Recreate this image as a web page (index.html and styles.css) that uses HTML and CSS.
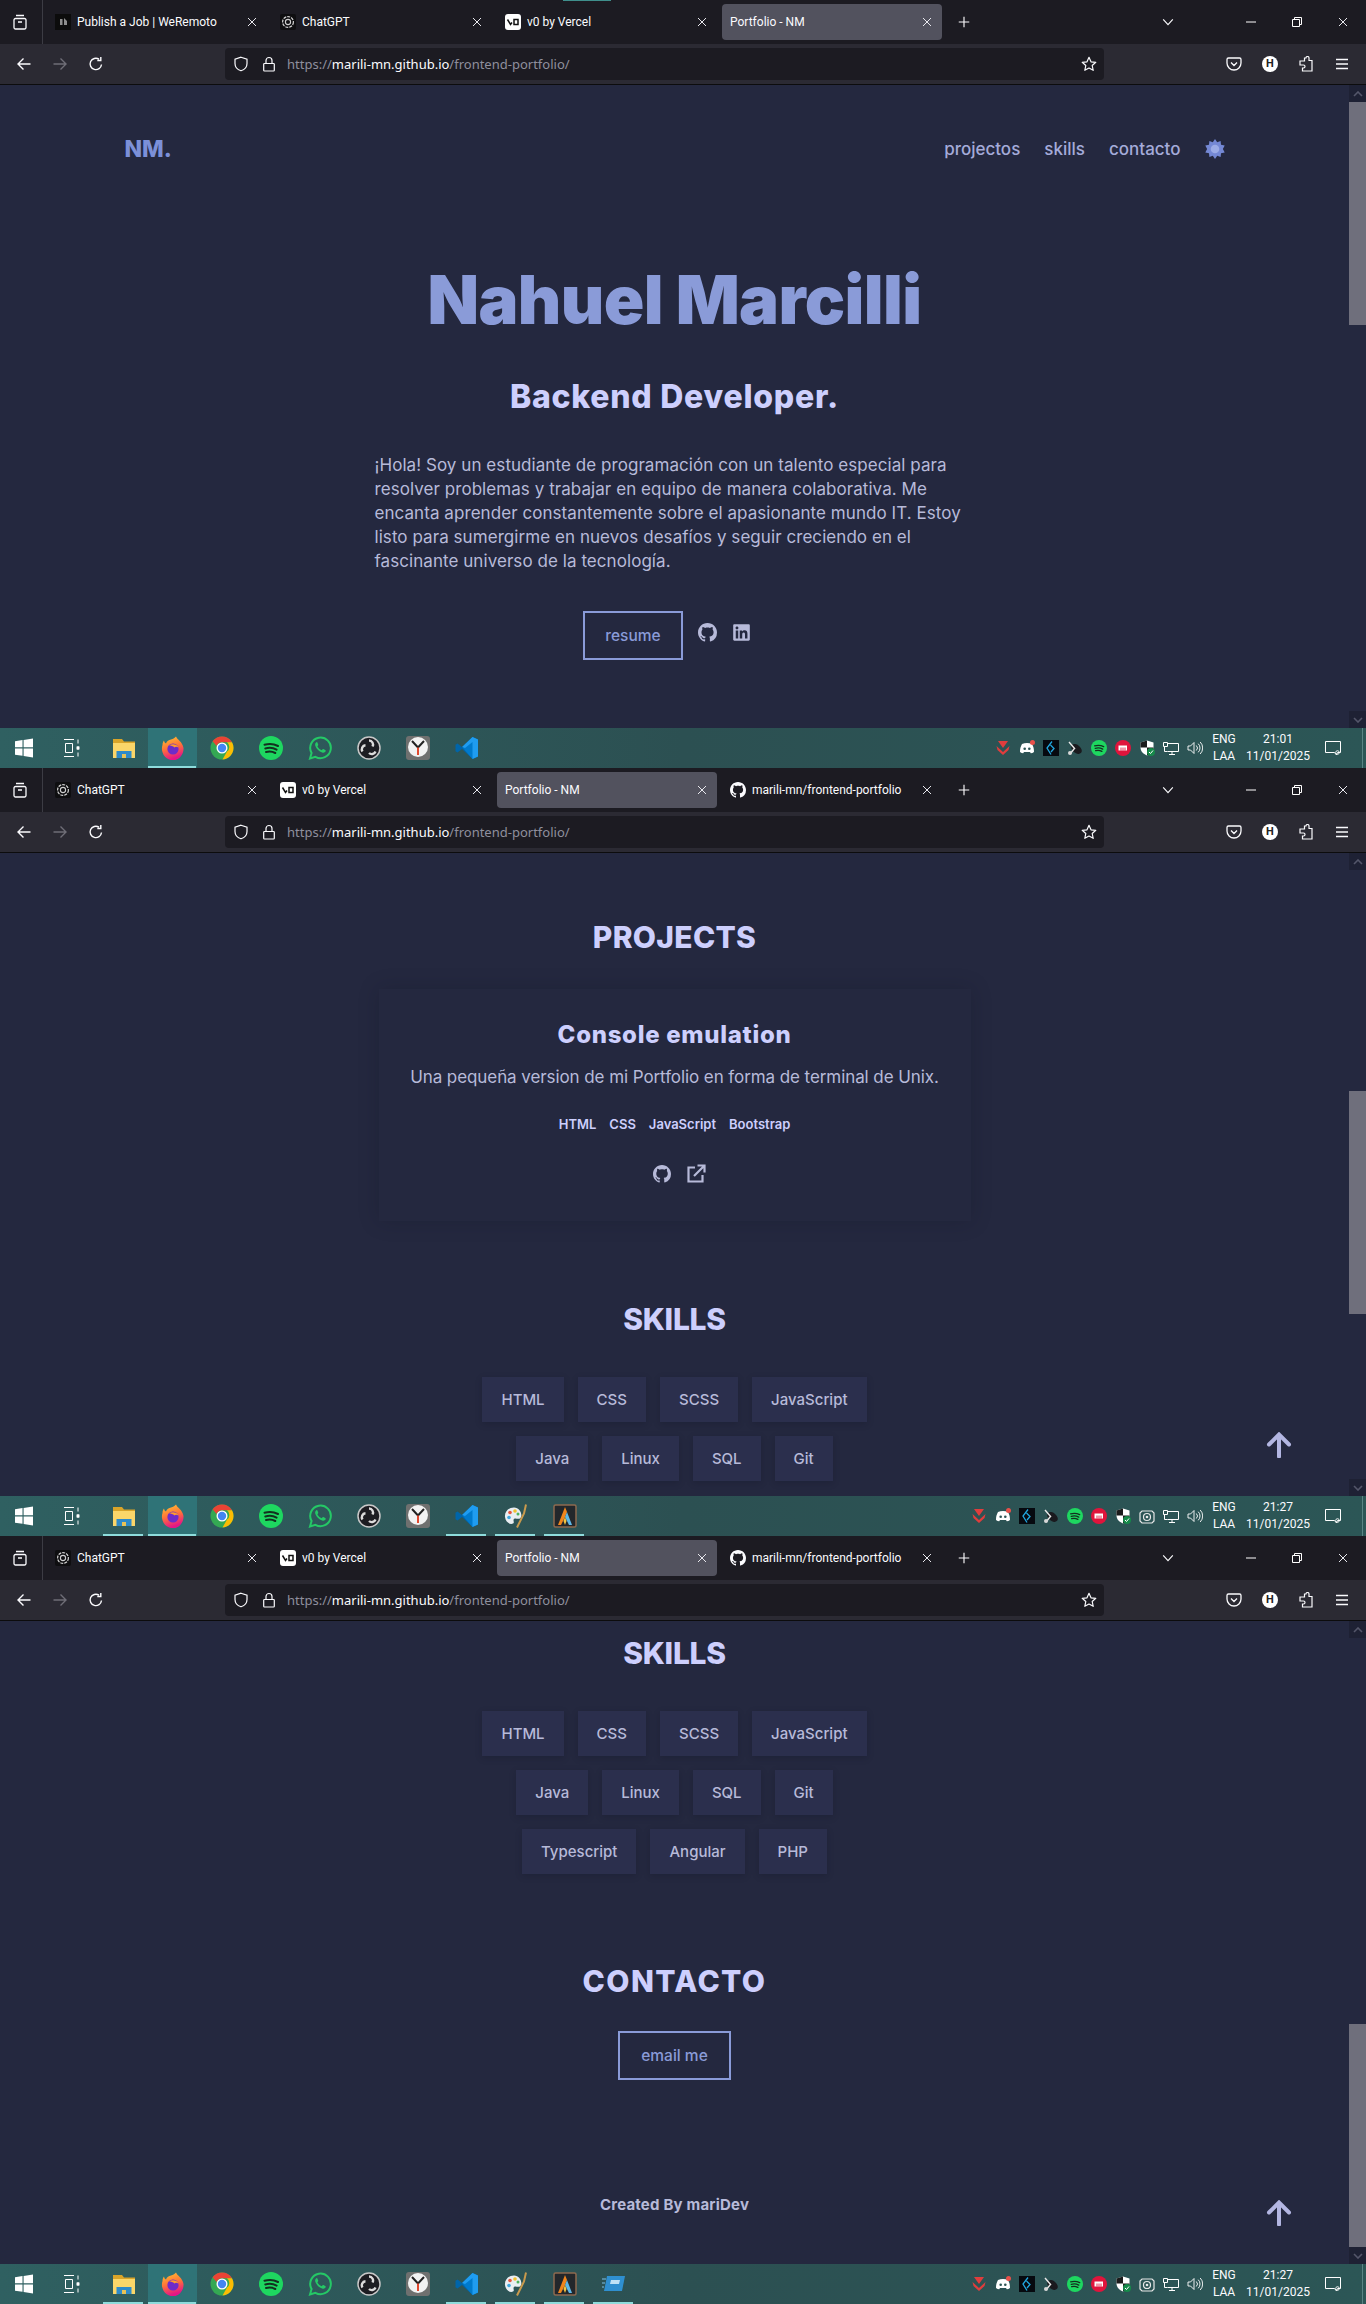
FILE: index.html
```html
<!doctype html>
<html lang="en">
	<head>
		<meta charset="utf-8" />
		<title>Portfolio - NM</title>
		<link rel="stylesheet" href="styles.css">
	</head>

	<body>
		<!-- Icon sprite -->
		<svg class="sprite" xmlns="http://www.w3.org/2000/svg">
			<symbol id="i-view" viewBox="0 0 16 16"><path d="M4 1.5h8M3.5 4.5h9A1.5 1.5 0 0 1 14 6v7.5a1.5 1.5 0 0 1-1.5 1.5h-9A1.5 1.5 0 0 1 2 13.500V6a1.500 1.500 0 0 1 1.500-1.500zM6 8h4" fill="none" stroke="#fbfbfe" stroke-width="1.300"/></symbol>
			<symbol id="i-close" viewBox="0 0 12 12"><path d="M2 2l8 8M10 2l-8 8" fill="none" stroke="#e8e8ee" stroke-width="1"/></symbol>
			<symbol id="i-plus" viewBox="0 0 16 16"><path d="M8 2v12M2 8h12" fill="none" stroke="#fbfbfe" stroke-width="1.300"/></symbol>
			<symbol id="i-chev" viewBox="0 0 16 16"><path d="M2.500 5l5.500 6 5.500-6" fill="none" stroke="#fbfbfe" stroke-width="1.300"/></symbol>
			<symbol id="i-min" viewBox="0 0 12 12"><path d="M1 6h10" stroke="#fff" stroke-width="1"/></symbol>
			<symbol id="i-max" viewBox="0 0 12 12"><path d="M1.500 3.500h7v7h-7zM3.500 3.500v-2h7v7h-2" fill="none" stroke="#fff" stroke-width="1"/></symbol>
			<symbol id="i-back" viewBox="0 0 16 16"><path d="M14.500 8H2M7.500 2.500L2 8l5.500 5.500" fill="none" stroke="currentColor" stroke-width="1.400"/></symbol>
			<symbol id="i-reload" viewBox="0 0 16 16"><path d="M13.500 8.500A5.700 5.700 0 1 1 11 3.200M12.800 1v3.500H9.300" fill="none" stroke="#fbfbfe" stroke-width="1.400"/></symbol>
			<symbol id="i-shield" viewBox="0 0 16 16"><path d="M8 1.200l6 2v4.300c0 3.700-2.500 6.200-6 7.300-3.500-1.100-6-3.600-6-7.300V3.200z" fill="none" stroke="#fbfbfe" stroke-width="1.200"/></symbol>
			<symbol id="i-lock" viewBox="0 0 16 16"><path d="M3.500 7.500h9a.8.8 0 0 1 .8.8v5.900a.8.8 0 0 1-.8.8h-9a.8.8 0 0 1-.8-.8V8.300a.8.8 0 0 1 .8-.8zM5 7.500V4.500a3 3 0 0 1 6 0v3" fill="none" stroke="#fbfbfe" stroke-width="1.200"/></symbol>
			<symbol id="i-star" viewBox="0 0 16 16"><path d="M8 1.300l2 4.500 4.800.5-3.600 3.200 1 4.800L8 12l-4.200 2.300 1-4.800-3.600-3.200 4.800-.5z" fill="none" stroke="#fbfbfe" stroke-width="1.200" stroke-linejoin="round"/></symbol>
			<symbol id="i-pocket" viewBox="0 0 16 16"><path d="M2.500 2h11A1.500 1.500 0 0 1 15 3.500V7a7 7 0 0 1-14 0V3.500A1.500 1.500 0 0 1 2.500 2zM5 6.500l3 3 3-3" fill="none" stroke="#fbfbfe" stroke-width="1.300"/></symbol>
			<symbol id="i-puzzle" viewBox="0 0 16 16"><path d="M6 1.500h1.500a1.500 1.500 0 0 1 3 0V4h3v10.500H4v-3H5a1.500 1.500 0 0 0 0-3H1.500V4.500H6z" transform="translate(.5 .5)" fill="none" stroke="#fbfbfe" stroke-width="1.200"/></symbol>
			<symbol id="i-menu" viewBox="0 0 16 16"><path d="M2 3.500h12M2 8h12M2 12.500h12" stroke="#fbfbfe" stroke-width="1.300"/></symbol>
			<symbol id="i-github" viewBox="0 0 16 16"><path fill="currentColor" d="M8 0C3.580 0 0 3.580 0 8c0 3.540 2.290 6.530 5.470 7.590.4.070.55-.17.55-.38 0-.19-.01-.82-.01-1.490-2.010.37-2.530-.49-2.690-.94-.09-.23-.48-.94-.82-1.130-.28-.15-.68-.52-.01-.53.63-.01 1.080.58 1.230.82.72 1.210 1.870.87 2.330.66.07-.52.28-.87.51-1.070-1.780-.2-3.640-.89-3.640-3.950 0-.87.31-1.590.82-2.150-.08-.2-.36-1.020.08-2.120 0 0 .67-.21 2.200.82.64-.18 1.320-.27 2-.27.68 0 1.360.09 2 .27 1.530-1.040 2.200-.82 2.200-.82.44 1.100.16 1.920.08 2.120.51.56.82 1.270.82 2.150 0 3.070-1.870 3.750-3.650 3.950.29.25.54.73.54 1.480 0 1.070-.01 1.930-.01 2.200 0 .21.15.46.55.38A8.013 8.013 0 0 0 16 8c0-4.420-3.580-8-8-8z"/></symbol>
			<symbol id="i-linkedin" viewBox="0 0 448 512"><path fill="currentColor" d="M416 32H31.900C14.300 32 0 46.500 0 64.300v383.400C0 465.500 14.300 480 31.900 480H416c17.600 0 32-14.500 32-32.300V64.300c0-17.800-14.400-32.300-32-32.300zM135.400 416H69V202.200h66.500V416zm-33.200-243c-21.300 0-38.500-17.300-38.500-38.500S80.900 96 102.200 96c21.200 0 38.500 17.300 38.500 38.500 0 21.300-17.200 38.500-38.500 38.500zm282.100 243h-66.400V312c0-24.800-.5-56.700-34.500-56.700-34.600 0-39.900 27-39.900 54.900V416h-66.400V202.200h63.700v29.200h.9c8.900-16.800 30.600-34.500 62.900-34.500 67.200 0 79.700 44.300 79.700 101.900V416z"/></symbol>
			<symbol id="i-ext" viewBox="0 0 20 20"><path d="M9 3.500H2.500v14h14V11M8 12L18 2M11.500 1.500h7v7" fill="none" stroke="currentColor" stroke-width="2.200"/></symbol>
			<symbol id="i-sun" viewBox="0 0 20 20"><path fill="#7488d4" d="M10 0l2.200 3.200L15.600 2l.4 3.800 3.700.7-1.800 3.500 1.800 3.500-3.700.7-.4 3.800-3.400-1.200L10 20l-2.200-3.200L4.400 18 4 14.200.3 13.500 2.100 10 .3 6.500 4 5.800 4.400 2l3.400 1.200z"/><circle cx="10" cy="10" r="4.300" fill="#9cace6"/></symbol>
			<symbol id="i-up" viewBox="0 0 26 26"><path d="M13 24.500V3M3 12.500L13 2.500l10 10" fill="none" stroke="currentColor" stroke-width="4" stroke-linecap="round"/></symbol>
			<symbol id="i-sb-up" viewBox="0 0 10 6"><path d="M1 5l4-4 4 4" fill="none" stroke="#54566a" stroke-width="1.600"/></symbol>

			<!-- Favicons -->
			<symbol id="f-remoto" viewBox="0 0 16 16"><rect width="16" height="16" fill="#0c0c0c"/><path d="M5 5h2.500v6H5zM9 4l3 3v4H9z" fill="#8d8d8d"/></symbol>
			<symbol id="f-gpt" viewBox="0 0 16 16"><rect width="16" height="16" rx="2" fill="#0e0e10"/><circle cx="8" cy="8" r="5.400" fill="none" stroke="#d0d0d0" stroke-width="1.200" stroke-dasharray="3 1"/><circle cx="8" cy="8" r="2.600" fill="none" stroke="#d0d0d0" stroke-width="1.100"/></symbol>
			<symbol id="f-v0" viewBox="0 0 16 16"><rect width="16" height="16" rx="3" fill="#fff"/><path d="M2.500 5.500L5.500 10.500 7 8.500M9 5.500h4v5H9z" fill="none" stroke="#111" stroke-width="1.500"/></symbol>
			<symbol id="f-gh" viewBox="0 0 16 16"><use href="#i-github" color="#fbfbfe" width="16" height="16"/></symbol>

			<!-- Taskbar apps -->
			<symbol id="a-win" viewBox="0 0 20 20"><path fill="#fff" d="M1 3.200l7.500-1.100v7.200H1zM9.600 2l9.400-1.400v8.700H9.600zM1 10.500h7.500v7.300L1 16.700zM9.600 10.500H19v8.900L9.600 18z"/></symbol>
			<symbol id="a-tasks" viewBox="0 0 20 20"><path d="M2 1.500h10M2 18.500h10M3.500 5.500h7v9h-7zM16 1.500v4M16 8v4M16 14.500v4" fill="none" stroke="#fff" stroke-width="1"/><path d="M14.500 8.500h3v3h-3z" fill="#fff"/></symbol>
			<symbol id="a-folder" viewBox="0 0 24 24"><path fill="#d9a429" d="M1 3h9l2 2.500h11V9H1z"/><path fill="#fbd669" d="M1 7h22v15H1z"/><path fill="#2e8ac9" d="M4.500 15h15v7h-15z"/><path fill="#e8c256" d="M10 18h4v4h-4z"/></symbol>
			<symbol id="a-firefox" viewBox="0 0 24 24"><defs><linearGradient id="ffg" x1="0" y1="0" x2="0.3" y2="1"><stop offset="0" stop-color="#ffc92f"/><stop offset=".55" stop-color="#ff7139"/><stop offset="1" stop-color="#e31587"/></linearGradient></defs><path fill="url(#ffg)" d="M15 .5c1 3 6.500 5 7.500 11.500A10.800 11.500 0 1 1 1.500 9c0-2 .7-3.500 1.500-4.500.2 1.500 1 2.500 2 3 .5-2.500 3-3.500 5-4 .5 0 3.500-1 5-3z"/><circle cx="12" cy="13" r="5.600" fill="#6e2bc9"/><path fill="#ff9a2e" d="M8 9.500c3-2 8-1.500 9.500 2-2-1-3-1-4 0-1.500-1.500-3.500-2-5.500-2z"/></symbol>
			<symbol id="a-chrome" viewBox="0 0 24 24"><circle cx="12" cy="12" r="11.500" fill="#34a853"/><path fill="#ea4335" d="M12 .5a11.500 11.500 0 0 1 10 5.800H12a5.700 5.700 0 0 0-5.400 3.600L2.600 5.300A11.500 11.500 0 0 1 12 .5z"/><path fill="#fbbc04" d="M22 6.300A11.500 11.500 0 0 1 12.500 23.500L17 15.500a5.700 5.700 0 0 0 0-9.200z"/><circle cx="12" cy="12" r="5.500" fill="#fff"/><circle cx="12" cy="12" r="4.200" fill="#4285f4"/></symbol>
			<symbol id="a-spotify" viewBox="0 0 24 24"><circle cx="12" cy="12" r="12" fill="#1ed760"/><path d="M5.500 8.800c4.500-1.300 9.500-.9 13.500 1.200M6.300 12.500c3.800-1.100 8-.7 11.300 1.100M7 16c3.200-.8 6.500-.5 9.300 1" fill="none" stroke="#13301f" stroke-width="2" stroke-linecap="round"/></symbol>
			<symbol id="a-wa" viewBox="0 0 24 24"><path d="M2 22.500l1.600-5.500a10.300 10.300 0 1 1 3.800 3.800z" fill="none" stroke="#25c866" stroke-width="2"/><path fill="#25c866" d="M8.200 6.500c-1 .6-1.400 2-.8 3.500 1.200 3 3.700 5.500 6.700 6.600 1.600.5 2.900 0 3.400-1 .4-.8.200-1.300-.3-1.600l-1.800-.9c-.5-.2-.8 0-1.100.4l-.6.7c-1.900-.7-3.500-2.200-4.300-4l.6-.7c.3-.4.400-.7.200-1.100l-.8-1.800c-.2-.6-.6-.7-1.200-.1z"/></symbol>
			<symbol id="a-obs" viewBox="0 0 24 24"><circle cx="12" cy="12" r="11" fill="#1d1d22" stroke="#c8c8c8" stroke-width="1.500"/><path d="M12 4.500a4 4 0 0 1 3.500 6M5.500 15.500a4 4 0 0 1 3-6.200M18.500 15.500a4 4 0 0 1-6.500 1.500" fill="none" stroke="#dcdcdc" stroke-width="2.400"/></symbol>
			<symbol id="a-clock" viewBox="0 0 24 24"><rect width="24" height="24" rx="3" fill="#6f706f"/><circle cx="12" cy="11" r="10" fill="#f2f2f2"/><path d="M6 5l6 6.500L18 5" fill="none" stroke="#222" stroke-width="2"/><path d="M12 11.500V19" stroke="#e2492f" stroke-width="2"/></symbol>
			<symbol id="a-code" viewBox="0 0 24 24"><path fill="#0065a9" d="M17.500 1L7 11 2.500 7.500 .5 8.800V15.200l2 1.300L7 13l10.500 10z"/><path fill="#007acc" d="M17.500 1l5.500 2.500v17L17.500 23 8 12z"/><path fill="#1f9cf0" d="M17.500 1L23 3.500v17L17.500 23V6L10 12l-3-1z"/></symbol>
			<symbol id="a-paint" viewBox="0 0 24 24"><path fill="#e9eef2" d="M10 3.500C4 3.500 .5 8 1 13c.5 5 5 8 8 6.500 2-1-.5-3 1-4.500s4.500 1 6.500-1c2.500-3-.5-10.500-6.500-10.500z"/><circle cx="6" cy="8.500" r="1.800" fill="#e5563f"/><circle cx="11" cy="7" r="1.800" fill="#f2c230"/><circle cx="5" cy="13.500" r="1.800" fill="#3fa7e0"/><circle cx="14" cy="10" r="1.500" fill="#4db35e"/><path d="M22 .5l-2 9L13 23.500" fill="none" stroke="#c99a4d" stroke-width="2"/></symbol>
			<symbol id="a-alacritty" viewBox="0 0 24 24"><rect x="1" y="1" width="22" height="22" rx="1.500" fill="#23272b" stroke="#8d6a4f" stroke-width="1.500"/><path fill="#f0851d" d="M12 3l2 5-2 5-4 8H5z"/><path fill="#5fb8e8" d="M12 13l2-5 5 13h-3z"/><path fill="#f4c542" d="M12 13l1.500 4-1.500 4-1.500-4z"/></symbol>
			<symbol id="a-slides" viewBox="0 0 24 24"><path fill="#2f8fd0" d="M5 4h18l-3 15H2z"/><path fill="#bfe2f7" d="M9 8h9l-1 4H8z"/><path d="M0 7h4M0 11h3M0 15h2" stroke="#7cc2ea" stroke-width="1"/></symbol>

			<!-- Tray -->
			<symbol id="t-vortex" viewBox="0 0 16 16"><path fill="#e03d3d" d="M3 1h10l-5 7zM1.500 6L8 12l6.500-6-1 4L8 15 2.500 10z"/></symbol>
			<symbol id="t-discord" viewBox="0 0 16 16"><path fill="#fff" d="M3 4c3-1.200 7-1.200 10 0 1.500 2.500 2 5 2 8-1 .8-2.200 1.200-3.200 1.300l-.8-1.300H5l-.8 1.300C3.200 13.200 2 12.800 1 12c0-3 .5-5.500 2-8z"/><circle cx="5.700" cy="8.700" r="1.300" fill="#2d5454"/><circle cx="10.300" cy="8.700" r="1.300" fill="#2d5454"/><circle cx="13.500" cy="2.500" r="2.500" fill="#e8504a"/></symbol>
			<symbol id="t-blue" viewBox="0 0 16 16"><rect width="16" height="16" fill="#06090f"/><path d="M9 1.500L4 8l4 6.500M7.500 5L11 8.500 8 12" fill="none" stroke="#22a7e0" stroke-width="1.300"/></symbol>
			<symbol id="t-dish" viewBox="0 0 16 16"><ellipse cx="9.500" cy="9" rx="6" ry="4" transform="rotate(40 9.500 9)" fill="#1a1a1e"/><path d="M2 2l6 7M3 14l4-5" stroke="#e8e8e8" stroke-width="1.400"/><circle cx="3" cy="13" r="2" fill="#d8d8d8"/></symbol>
			<symbol id="t-red" viewBox="0 0 16 16"><circle cx="8" cy="8" r="8" fill="#e0143c"/><path fill="#fff" d="M3.500 5.500h8.500v5H3.500z"/><path d="M6 7.500v3M8 7.500v3M10 7.500v3" stroke="#e0143c" stroke-width=".9"/></symbol>
			<symbol id="t-def" viewBox="0 0 16 16"><path fill="#fff" d="M8 .5l6.500 2v5c0 3.500-2.500 6.500-6.500 8-4-1.500-6.500-4.500-6.500-8v-5z"/><path fill="#1b1b1b" d="M8 .5v7H1.500v-5zM8 7.500h6.500c0 3.500-2.500 6.500-6.500 8z"/><circle cx="12" cy="12" r="4" fill="#168a4a"/><path d="M10 12l1.500 1.500 2.500-3" fill="none" stroke="#fff" stroke-width="1"/></symbol>
			<symbol id="t-net" viewBox="0 0 16 16"><path d="M.5 2.500h4v4h-4zM4.500 3.500H15.500v8h-11M1.500 6.500v5h3M6 14.500h6M9 11.500v3" fill="none" stroke="#fff" stroke-width="1"/></symbol>
			<symbol id="t-vol" viewBox="0 0 16 16"><path d="M1 6h2.500L7 2.500v11L3.500 10H1zM9.300 5.500a3.500 3.500 0 0 1 0 5M11.200 3.700a6 6 0 0 1 0 8.600M13.200 2a8.500 8.500 0 0 1 0 12" fill="none" stroke="#fff" stroke-width=".9"/></symbol>
			<symbol id="t-note" viewBox="0 0 16 16"><path d="M.5 1.500h15v11h-3l-1 2.500-2-2.500H.5z" fill="none" stroke="#fff" stroke-width="1"/><circle cx="12.500" cy="12.500" r="1.800" fill="none" stroke="#fff" stroke-width=".9"/></symbol>
			<symbol id="t-cam" viewBox="0 0 16 16"><path d="M3 3h10l2 2v8l-2 2H3l-2-2V5z" fill="none" stroke="#e8e8e8" stroke-width="1.200"/><circle cx="8" cy="9" r="3.500" fill="none" stroke="#e8e8e8" stroke-width="1.200"/><circle cx="8" cy="9" r="1.300" fill="#e8e8e8"/></symbol>
		</svg>

		<!-- First capture: hero -->
		<section class="screen">
			<span class="edge-strip"></span>
			<div class="tabbar">
				<div class="view-btn"><svg class="ic-16"><use href="#i-view"/></svg></div>
				<div class="tab"><svg class="favicon"><use href="#f-remoto"/></svg><span class="tab-title">Publish a Job | WeRemoto</span><svg class="tab-close"><use href="#i-close"/></svg></div>
				<div class="tab"><svg class="favicon"><use href="#f-gpt"/></svg><span class="tab-title">ChatGPT</span><svg class="tab-close"><use href="#i-close"/></svg></div>
				<div class="tab"><svg class="favicon"><use href="#f-v0"/></svg><span class="tab-title">v0 by Vercel</span><svg class="tab-close"><use href="#i-close"/></svg></div>
				<div class="tab active"><span class="tab-title">Portfolio - NM</span><svg class="tab-close"><use href="#i-close"/></svg></div>
				<div class="new-tab"><svg class="ic-14"><use href="#i-plus"/></svg></div>
				<div class="all-tabs"><svg class="ic-14"><use href="#i-chev"/></svg></div>
				<div class="win-btn"><svg class="ic-12"><use href="#i-min"/></svg></div>
				<div class="win-btn"><svg class="ic-12"><use href="#i-max"/></svg></div>
				<div class="win-btn"><svg class="ic-12"><use href="#i-close"/></svg></div>
			</div>
			<div class="toolbar">
				<div class="tool-btn"><svg class="ic-16"><use href="#i-back"/></svg></div>
				<div class="tool-btn off flip"><svg class="ic-16"><use href="#i-back"/></svg></div>
				<div class="tool-btn"><svg class="ic-16"><use href="#i-reload"/></svg></div>
				<div class="urlbar">
					<svg class="ic-16 url-shield"><use href="#i-shield"/></svg>
					<svg class="ic-16 url-lock"><use href="#i-lock"/></svg>
					<span class="url">https://<b>marili-mn.github.io</b>/frontend-portfolio/</span>
					<svg class="ic-16 url-star"><use href="#i-star"/></svg>
				</div>
				<div class="tool-actions">
					<div class="tool-btn"><svg class="ic-16"><use href="#i-pocket"/></svg></div>
					<div class="tool-btn"><span class="avatar">H</span></div>
					<div class="tool-btn"><svg class="ic-16"><use href="#i-puzzle"/></svg></div>
					<div class="tool-btn"><svg class="ic-16"><use href="#i-menu"/></svg></div>
				</div>
			</div>
			<div class="view">
				<main class="page">
					<nav class="nav">
						<span class="logo">NM.</span>
						<ul class="nav-links">
							<li>projectos</li>
							<li>skills</li>
							<li>contacto</li>
							<li class="theme"><svg class="ic-20"><use href="#i-sun"/></svg></li>
						</ul>
					</nav>
					<div class="hero">
						<h1>Nahuel Marcilli</h1>
						<h2>Backend Developer.</h2>
						<p class="about">¡Hola! Soy un estudiante de programación con un talento especial para<br>resolver problemas y trabajar en equipo de manera colaborativa. Me<br>encanta aprender constantemente sobre el apasionante mundo IT. Estoy<br>listo para sumergirme en nuevos desafíos y seguir creciendo en el<br>fascinante universo de la tecnología.</p>
						<div class="hero-actions">
							<a class="btn resume">resume</a>
							<svg class="social"><use href="#i-github"/></svg>
							<svg class="social"><use href="#i-linkedin"/></svg>
						</div>
					</div>
				</main>
				<div class="scrollbar">
					<div class="sb-btn"><svg class="sb-arrow"><use href="#i-sb-up"/></svg></div>
					<div class="sb-track"><div class="sb-thumb"></div></div>
					<div class="sb-btn down"><svg class="sb-arrow"><use href="#i-sb-up"/></svg></div>
				</div>
			</div>
			<div class="taskbar">
				<div class="start"><svg class="ic-20"><use href="#a-win"/></svg></div>
				<div class="start tasks"><svg class="ic-20"><use href="#a-tasks"/></svg></div>
				<div class="app"><svg class="ic-24"><use href="#a-folder"/></svg></div>
				<div class="app open active"><svg class="ic-24"><use href="#a-firefox"/></svg></div>
				<div class="app"><svg class="ic-24"><use href="#a-chrome"/></svg></div>
				<div class="app"><svg class="ic-24"><use href="#a-spotify"/></svg></div>
				<div class="app"><svg class="ic-24"><use href="#a-wa"/></svg></div>
				<div class="app"><svg class="ic-24"><use href="#a-obs"/></svg></div>
				<div class="app"><svg class="ic-24"><use href="#a-clock"/></svg></div>
				<div class="app"><svg class="ic-24"><use href="#a-code"/></svg></div>
				<div class="tray">
					<div class="tray-icon"><svg class="ic-16"><use href="#t-vortex"/></svg></div>
					<div class="tray-icon"><svg class="ic-16"><use href="#t-discord"/></svg></div>
					<div class="tray-icon"><svg class="ic-16"><use href="#t-blue"/></svg></div>
					<div class="tray-icon"><svg class="ic-16"><use href="#t-dish"/></svg></div>
					<div class="tray-icon"><svg class="ic-16"><use href="#a-spotify"/></svg></div>
					<div class="tray-icon"><svg class="ic-16"><use href="#t-red"/></svg></div>
					<div class="tray-icon"><svg class="ic-16"><use href="#t-def"/></svg></div>
					<div class="tray-icon"><svg class="ic-16"><use href="#t-net"/></svg></div>
					<div class="tray-icon"><svg class="ic-16"><use href="#t-vol"/></svg></div>
					<div class="lang">ENG<br>LAA</div>
					<div class="clock">21:01<br>11/01/2025</div>
					<div class="notify"><svg class="ic-16"><use href="#t-note"/></svg></div>
					<div class="show-desktop"></div>
				</div>
			</div>
		</section>

		<!-- Second capture: projects -->
		<section class="screen">
			<div class="tabbar">
				<div class="view-btn"><svg class="ic-16"><use href="#i-view"/></svg></div>
				<div class="tab"><svg class="favicon"><use href="#f-gpt"/></svg><span class="tab-title">ChatGPT</span><svg class="tab-close"><use href="#i-close"/></svg></div>
				<div class="tab"><svg class="favicon"><use href="#f-v0"/></svg><span class="tab-title">v0 by Vercel</span><svg class="tab-close"><use href="#i-close"/></svg></div>
				<div class="tab active"><span class="tab-title">Portfolio - NM</span><svg class="tab-close"><use href="#i-close"/></svg></div>
				<div class="tab"><svg class="favicon"><use href="#f-gh"/></svg><span class="tab-title">marili-mn/frontend-portfolio</span><svg class="tab-close"><use href="#i-close"/></svg></div>
				<div class="new-tab"><svg class="ic-14"><use href="#i-plus"/></svg></div>
				<div class="all-tabs"><svg class="ic-14"><use href="#i-chev"/></svg></div>
				<div class="win-btn"><svg class="ic-12"><use href="#i-min"/></svg></div>
				<div class="win-btn"><svg class="ic-12"><use href="#i-max"/></svg></div>
				<div class="win-btn"><svg class="ic-12"><use href="#i-close"/></svg></div>
			</div>
			<div class="toolbar">
				<div class="tool-btn"><svg class="ic-16"><use href="#i-back"/></svg></div>
				<div class="tool-btn off flip"><svg class="ic-16"><use href="#i-back"/></svg></div>
				<div class="tool-btn"><svg class="ic-16"><use href="#i-reload"/></svg></div>
				<div class="urlbar">
					<svg class="ic-16 url-shield"><use href="#i-shield"/></svg>
					<svg class="ic-16 url-lock"><use href="#i-lock"/></svg>
					<span class="url">https://<b>marili-mn.github.io</b>/frontend-portfolio/</span>
					<svg class="ic-16 url-star"><use href="#i-star"/></svg>
				</div>
				<div class="tool-actions">
					<div class="tool-btn"><svg class="ic-16"><use href="#i-pocket"/></svg></div>
					<div class="tool-btn"><span class="avatar">H</span></div>
					<div class="tool-btn"><svg class="ic-16"><use href="#i-puzzle"/></svg></div>
					<div class="tool-btn"><svg class="ic-16"><use href="#i-menu"/></svg></div>
				</div>
			</div>
			<div class="view">
				<main class="page projects-view">
					<h2 class="section-title projects-title">PROJECTS</h2>
					<article class="card">
						<h3>Console emulation</h3>
						<p>Una pequeña version de mi Portfolio en forma de terminal de Unix.</p>
						<ul class="stack">
							<li>HTML</li>
							<li>CSS</li>
							<li>JavaScript</li>
							<li>Bootstrap</li>
						</ul>
						<div class="card-links">
							<svg class="card-icon gh"><use href="#i-github"/></svg>
							<svg class="card-icon"><use href="#i-ext"/></svg>
						</div>
					</article>
					<h2 class="section-title skills-title gap-top">SKILLS</h2>
					<!-- Third row sits below the fold in this capture -->
					<ul class="skills">
						<li>HTML</li>
						<li>CSS</li>
						<li>SCSS</li>
						<li>JavaScript</li>
						<li>Java</li>
						<li>Linux</li>
						<li>SQL</li>
						<li>Git</li>
					</ul>
				</main>
				<svg class="to-top"><use href="#i-up"/></svg>
				<div class="scrollbar">
					<div class="sb-btn"><svg class="sb-arrow"><use href="#i-sb-up"/></svg></div>
					<div class="sb-track"><div class="sb-thumb mid"></div></div>
					<div class="sb-btn down"><svg class="sb-arrow"><use href="#i-sb-up"/></svg></div>
				</div>
			</div>
			<div class="taskbar">
				<div class="start"><svg class="ic-20"><use href="#a-win"/></svg></div>
				<div class="start tasks"><svg class="ic-20"><use href="#a-tasks"/></svg></div>
				<div class="app open"><svg class="ic-24"><use href="#a-folder"/></svg></div>
				<div class="app open active"><svg class="ic-24"><use href="#a-firefox"/></svg></div>
				<div class="app"><svg class="ic-24"><use href="#a-chrome"/></svg></div>
				<div class="app"><svg class="ic-24"><use href="#a-spotify"/></svg></div>
				<div class="app"><svg class="ic-24"><use href="#a-wa"/></svg></div>
				<div class="app"><svg class="ic-24"><use href="#a-obs"/></svg></div>
				<div class="app"><svg class="ic-24"><use href="#a-clock"/></svg></div>
				<div class="app open"><svg class="ic-24"><use href="#a-code"/></svg></div>
				<div class="app open"><svg class="ic-24"><use href="#a-paint"/></svg></div>
				<div class="app open"><svg class="ic-24"><use href="#a-alacritty"/></svg></div>
				<div class="tray">
					<div class="tray-icon"><svg class="ic-16"><use href="#t-vortex"/></svg></div>
					<div class="tray-icon"><svg class="ic-16"><use href="#t-discord"/></svg></div>
					<div class="tray-icon"><svg class="ic-16"><use href="#t-blue"/></svg></div>
					<div class="tray-icon"><svg class="ic-16"><use href="#t-dish"/></svg></div>
					<div class="tray-icon"><svg class="ic-16"><use href="#a-spotify"/></svg></div>
					<div class="tray-icon"><svg class="ic-16"><use href="#t-red"/></svg></div>
					<div class="tray-icon"><svg class="ic-16"><use href="#t-def"/></svg></div>
					<div class="tray-icon"><svg class="ic-16"><use href="#t-cam"/></svg></div>
					<div class="tray-icon"><svg class="ic-16"><use href="#t-net"/></svg></div>
					<div class="tray-icon"><svg class="ic-16"><use href="#t-vol"/></svg></div>
					<div class="lang">ENG<br>LAA</div>
					<div class="clock">21:27<br>11/01/2025</div>
					<div class="notify"><svg class="ic-16"><use href="#t-note"/></svg></div>
					<div class="show-desktop"></div>
				</div>
			</div>
		</section>

		<!-- Third capture: skills and contact -->
		<section class="screen">
			<div class="tabbar">
				<div class="view-btn"><svg class="ic-16"><use href="#i-view"/></svg></div>
				<div class="tab"><svg class="favicon"><use href="#f-gpt"/></svg><span class="tab-title">ChatGPT</span><svg class="tab-close"><use href="#i-close"/></svg></div>
				<div class="tab"><svg class="favicon"><use href="#f-v0"/></svg><span class="tab-title">v0 by Vercel</span><svg class="tab-close"><use href="#i-close"/></svg></div>
				<div class="tab active"><span class="tab-title">Portfolio - NM</span><svg class="tab-close"><use href="#i-close"/></svg></div>
				<div class="tab"><svg class="favicon"><use href="#f-gh"/></svg><span class="tab-title">marili-mn/frontend-portfolio</span><svg class="tab-close"><use href="#i-close"/></svg></div>
				<div class="new-tab"><svg class="ic-14"><use href="#i-plus"/></svg></div>
				<div class="all-tabs"><svg class="ic-14"><use href="#i-chev"/></svg></div>
				<div class="win-btn"><svg class="ic-12"><use href="#i-min"/></svg></div>
				<div class="win-btn"><svg class="ic-12"><use href="#i-max"/></svg></div>
				<div class="win-btn"><svg class="ic-12"><use href="#i-close"/></svg></div>
			</div>
			<div class="toolbar">
				<div class="tool-btn"><svg class="ic-16"><use href="#i-back"/></svg></div>
				<div class="tool-btn off flip"><svg class="ic-16"><use href="#i-back"/></svg></div>
				<div class="tool-btn"><svg class="ic-16"><use href="#i-reload"/></svg></div>
				<div class="urlbar">
					<svg class="ic-16 url-shield"><use href="#i-shield"/></svg>
					<svg class="ic-16 url-lock"><use href="#i-lock"/></svg>
					<span class="url">https://<b>marili-mn.github.io</b>/frontend-portfolio/</span>
					<svg class="ic-16 url-star"><use href="#i-star"/></svg>
				</div>
				<div class="tool-actions">
					<div class="tool-btn"><svg class="ic-16"><use href="#i-pocket"/></svg></div>
					<div class="tool-btn"><span class="avatar">H</span></div>
					<div class="tool-btn"><svg class="ic-16"><use href="#i-puzzle"/></svg></div>
					<div class="tool-btn"><svg class="ic-16"><use href="#i-menu"/></svg></div>
				</div>
			</div>
			<div class="view">
				<main class="page skills-view">
					<h2 class="section-title skills-title">SKILLS</h2>
					<ul class="skills">
						<li>HTML</li>
						<li>CSS</li>
						<li>SCSS</li>
						<li>JavaScript</li>
						<li>Java</li>
						<li>Linux</li>
						<li>SQL</li>
						<li>Git</li>
						<li>Typescript</li>
						<li>Angular</li>
						<li>PHP</li>
					</ul>
					<h2 class="section-title contact-title">CONTACTO</h2>
					<a class="btn email">email me</a>
					<footer class="credits">Created By mariDev</footer>
				</main>
				<svg class="to-top"><use href="#i-up"/></svg>
				<div class="scrollbar">
					<div class="sb-btn"><svg class="sb-arrow"><use href="#i-sb-up"/></svg></div>
					<div class="sb-track"><div class="sb-thumb end"></div></div>
					<div class="sb-btn down"><svg class="sb-arrow"><use href="#i-sb-up"/></svg></div>
				</div>
			</div>
			<div class="taskbar">
				<div class="start"><svg class="ic-20"><use href="#a-win"/></svg></div>
				<div class="start tasks"><svg class="ic-20"><use href="#a-tasks"/></svg></div>
				<div class="app open"><svg class="ic-24"><use href="#a-folder"/></svg></div>
				<div class="app open active"><svg class="ic-24"><use href="#a-firefox"/></svg></div>
				<div class="app"><svg class="ic-24"><use href="#a-chrome"/></svg></div>
				<div class="app"><svg class="ic-24"><use href="#a-spotify"/></svg></div>
				<div class="app"><svg class="ic-24"><use href="#a-wa"/></svg></div>
				<div class="app"><svg class="ic-24"><use href="#a-obs"/></svg></div>
				<div class="app"><svg class="ic-24"><use href="#a-clock"/></svg></div>
				<div class="app open"><svg class="ic-24"><use href="#a-code"/></svg></div>
				<div class="app open"><svg class="ic-24"><use href="#a-paint"/></svg></div>
				<div class="app open"><svg class="ic-24"><use href="#a-alacritty"/></svg></div>
				<div class="app open"><svg class="ic-24"><use href="#a-slides"/></svg></div>
				<div class="tray">
					<div class="tray-icon"><svg class="ic-16"><use href="#t-vortex"/></svg></div>
					<div class="tray-icon"><svg class="ic-16"><use href="#t-discord"/></svg></div>
					<div class="tray-icon"><svg class="ic-16"><use href="#t-blue"/></svg></div>
					<div class="tray-icon"><svg class="ic-16"><use href="#t-dish"/></svg></div>
					<div class="tray-icon"><svg class="ic-16"><use href="#a-spotify"/></svg></div>
					<div class="tray-icon"><svg class="ic-16"><use href="#t-red"/></svg></div>
					<div class="tray-icon"><svg class="ic-16"><use href="#t-def"/></svg></div>
					<div class="tray-icon"><svg class="ic-16"><use href="#t-cam"/></svg></div>
					<div class="tray-icon"><svg class="ic-16"><use href="#t-net"/></svg></div>
					<div class="tray-icon"><svg class="ic-16"><use href="#t-vol"/></svg></div>
					<div class="lang">ENG<br>LAA</div>
					<div class="clock">21:27<br>11/01/2025</div>
					<div class="notify"><svg class="ic-16"><use href="#t-note"/></svg></div>
					<div class="show-desktop"></div>
				</div>
			</div>
		</section>
	</body>
</html>
```

FILE: styles.css
```css
body {
	margin: 0;
	background-color: #24283f;
	font-family: Roboto, sans-serif;
	color: #fbfbfe;
}

ul {
	list-style: none;
	margin: 0;
	padding: 0;
}

/* Kept out of flow but not display:none, or the gradient in it stops painting */
.sprite {
	position: absolute;
	width: 0;
	height: 0;
}

.ic-12 { width: 12px; height: 12px; }
.ic-14 { width: 14px; height: 14px; }
.ic-16 { width: 16px; height: 16px; }
.ic-20 { width: 20px; height: 20px; }
.ic-24 { width: 24px; height: 24px; }

.screen {
	display: flex;
	flex-direction: column;
	height: 768px;
	position: relative;
	overflow: hidden;
}

.edge-strip {
	position: absolute;
	left: 563px;
	top: 0;
	width: 48px;
	height: 1px;
	background-color: #3f8f8c;
}

/* Browser tabs */
.tabbar {
	display: flex;
	align-items: center;
	height: 44px;
	flex-shrink: 0;
	background-color: #1c1b22;
}

.view-btn {
	display: flex;
	align-items: center;
	justify-content: center;
	width: 40px;
	height: 44px;
	margin-right: 4px;
	padding-right: 2px;
	border-right: 1px solid #3c3c44;
}

.tab {
	display: flex;
	align-items: center;
	width: 220px;
	height: 36px;
	margin-right: 5px;
	padding-left: 8px;
	box-sizing: border-box;
	border-radius: 4px;
	font-size: 12px;
}

.tab.active {
	background-color: #52525e;
}

.favicon {
	width: 16px;
	height: 16px;
	margin-right: 6px;
}

.tab-title {
	flex: 1;
	white-space: nowrap;
	overflow: hidden;
}

.tab-close {
	width: 12px;
	height: 12px;
	margin-right: 9px;
}

.new-tab {
	display: flex;
	margin-left: 10px;
}

.all-tabs {
	display: flex;
	margin-left: auto;
	margin-right: 53px;
}

.win-btn {
	display: flex;
	align-items: center;
	justify-content: center;
	width: 46px;
}

/* Browser toolbar */
.toolbar {
	display: flex;
	align-items: center;
	height: 40px;
	flex-shrink: 0;
	padding-left: 6px;
	background-color: #2b2a33;
	border-bottom: 1px solid #0c0c0d;
}

.tool-btn {
	display: flex;
	align-items: center;
	justify-content: center;
	width: 36px;
	color: #fbfbfe;
}

.tool-btn.off {
	color: #6f6e77;
}

.flip svg {
	transform: scaleX(-1);
}

.urlbar {
	display: flex;
	align-items: center;
	width: 879px;
	height: 32px;
	margin-left: 111px;
	border-radius: 4px;
	background-color: #1c1b22;
	box-sizing: border-box;
	padding-left: 8px;
	padding-right: 7px;
}

.url-lock {
	margin-left: 12px;
}

.url {
	margin-left: 10px;
	font-family: "Noto Sans", sans-serif;
	font-size: 13px;
	color: #8f8f9d;
	white-space: nowrap;
}

.url b {
	font-weight: normal;
	color: #fbfbfe;
}

.url-star {
	margin-left: auto;
}

.tool-actions {
	display: flex;
	margin-left: auto;
	margin-right: 6px;
}

.avatar {
	display: block;
	width: 16px;
	height: 16px;
	border-radius: 50%;
	background-color: #fff;
	color: #222;
	font-size: 11px;
	font-weight: 700;
	line-height: 16px;
	text-align: center;
}

/* Page area */
.view {
	display: flex;
	flex: 1;
	min-height: 0;
	position: relative;
	overflow: hidden;
	background-color: #24283f;
}

.page {
	flex: 1;
	min-width: 0;
	font-family: Inter, sans-serif;
	text-align: center;
	color: #b7bad9;
}

.scrollbar {
	display: flex;
	flex-direction: column;
	width: 17px;
}

.sb-btn {
	display: flex;
	align-items: center;
	justify-content: center;
	height: 17px;
	background-color: #1e2134;
}

.sb-btn.down svg {
	transform: rotate(180deg);
}

.sb-arrow {
	width: 10px;
	height: 6px;
}

.sb-track {
	display: flex;
	flex-direction: column;
	flex: 1;
	background-color: #24283f;
}

.sb-thumb {
	height: 223px;
	background-color: #6f6f7c;
}

.sb-thumb.mid {
	margin-top: 221px;
}

.sb-thumb.end {
	margin-top: auto;
}

.nav {
	display: flex;
	justify-content: space-between;
	align-items: center;
	width: 1100px;
	height: 32px;
	margin: 0 auto;
	padding-top: 48px;
}

.logo {
	font-size: 23px;
	font-weight: 800;
	color: #7c90d8;
}

.nav-links {
	display: flex;
	align-items: center;
	gap: 24px;
	font-size: 17px;
	font-weight: 500;
	color: #a4abd9;
}

.theme {
	display: flex;
}

.hero {
	padding-top: 95px;
}

.hero h1 {
	margin: 0;
	font-size: 67px;
	line-height: 80px;
	font-weight: 900;
	letter-spacing: -0.6px;
	color: #8a9bd8;
}

.hero h2 {
	margin: 37px 0 0;
	font-size: 32px;
	line-height: 40px;
	font-weight: 800;
	letter-spacing: 0.75px;
	color: #cdcffd;
}

.about {
	width: 600px;
	margin: 36px auto 0;
	font-size: 17px;
	line-height: 24px;
	font-weight: 400;
	letter-spacing: 0.06px;
	text-align: left;
}

.hero-actions {
	display: flex;
	justify-content: center;
	gap: 15px;
	margin-top: 38px;
	padding-right: 15px;
	color: #b7bad9;
}

.btn {
	display: block;
	box-sizing: border-box;
	height: 49px;
	line-height: 45px;
	border: 2px solid #8a9bd8;
	font-size: 15.5px;
	font-weight: 500;
	color: #8a9bd8;
}

.resume {
	width: 100px;
}

.social {
	width: 19px;
	height: 19px;
	margin-top: 12px;
}

.section-title {
	margin: 0;
	font-size: 30px;
	line-height: 36px;
	font-weight: 800;
	color: #cdcffd;
}

.projects-title {
	letter-spacing: 0.3px;
}

.skills-title {
	letter-spacing: -0.3px;
}

.contact-title {
	letter-spacing: 1.4px;
	margin-top: 89px;
}

.projects-view {
	padding-top: 66px;
}

.card {
	width: 592px;
	height: 232px;
	margin: 34px auto 0;
	box-sizing: border-box;
	padding-top: 31px;
	box-shadow: 0 0 18px rgba(16, 18, 34, 0.25);
}

.card h3 {
	margin: 0;
	font-size: 24px;
	line-height: 30px;
	font-weight: 800;
	letter-spacing: 0.7px;
	color: #cdcffd;
}

.card p {
	margin: 15px 0 0;
	font-size: 17px;
	line-height: 24px;
	font-weight: 400;
	letter-spacing: -0.08px;
}

.stack {
	display: flex;
	justify-content: center;
	gap: 13px;
	margin-top: 25px;
	font-size: 13px;
	line-height: 20px;
	font-weight: 600;
	color: #cdcffd;
}

.card-links {
	display: flex;
	justify-content: center;
	align-items: center;
	gap: 15px;
	margin-top: 30px;
	padding-left: 9px;
}

.card-icon {
	width: 20px;
	height: 20px;
	color: #b7bad9;
}

.card-icon.gh {
	width: 18px;
	height: 18px;
}

.gap-top {
	margin-top: 80px;
}

.skills {
	display: flex;
	flex-wrap: wrap;
	justify-content: center;
	gap: 14px;
	width: 420px;
	margin: 40px auto 0;
}

.skills li {
	padding: 0 19px;
	height: 45px;
	line-height: 45px;
	font-size: 15px;
	font-weight: 500;
	background-color: #2b2f4d;
	box-shadow: 0 2px 6px rgba(16, 18, 34, 0.25);
}

.skills-view {
	padding-top: 14px;
}

.email {
	width: 113px;
	margin: 32px auto 0;
}

.credits {
	margin-top: 115px;
	font-size: 15px;
	letter-spacing: 0.2px;
	font-weight: 700;
}

.to-top {
	position: absolute;
	right: 74px;
	bottom: 38px;
	width: 26px;
	height: 26px;
	color: #b3b6e2;
}

/* Windows taskbar */
.taskbar {
	display: flex;
	align-items: center;
	height: 40px;
	flex-shrink: 0;
	background: linear-gradient(90deg, #2f6061, #2c5052 50%, #2c5656);
}

.start {
	display: flex;
	align-items: center;
	justify-content: center;
	width: 48px;
	height: 40px;
}

.start.tasks {
	margin-right: 3px;
}

.app {
	display: flex;
	align-items: center;
	justify-content: center;
	width: 49px;
	height: 40px;
	position: relative;
}

.app.open::after {
	content: "";
	position: absolute;
	left: 4px;
	bottom: 0;
	width: 40px;
	height: 2px;
	background-color: #8edcdc;
}

.app.active {
	background-color: #2f7377;
}

.app.active::after {
	left: 0;
	width: 48px;
}

.tray {
	display: flex;
	align-items: center;
	margin-left: auto;
	font-size: 12px;
	line-height: 17px;
}

.tray-icon {
	display: flex;
	justify-content: center;
	width: 24px;
}

.lang {
	width: 34px;
	text-align: center;
}

.clock {
	width: 74px;
	text-align: center;
}

.notify {
	display: flex;
	justify-content: center;
	width: 36px;
}

.show-desktop {
	width: 11px;
	height: 40px;
	margin-right: 3px;
	border-right: 1px solid #5a8484;
}
```
